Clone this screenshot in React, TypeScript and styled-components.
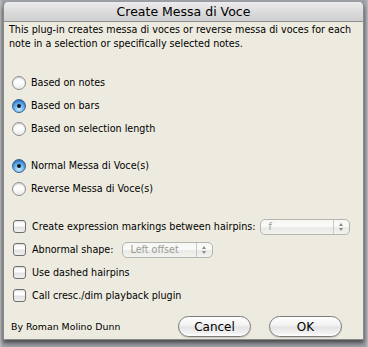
import React from "react";
import styled, { createGlobalStyle } from "styled-components";

const GlobalStyle = createGlobalStyle`
  html, body {
    margin: 0;
    padding: 0;
    background: #8d8f93;
  }
  body {
    width: 368px;
    height: 347px;
    overflow: hidden;
    font-family: "DejaVu Sans", "Liberation Sans", sans-serif;
  }
`;

const Backdrop = styled.div`
  width: 368px;
  height: 347px;
  padding: 2px 4px 0 3px;
  box-sizing: border-box;
  background: linear-gradient(90deg, #b9bbbf 0px, #9ea1a6 3px, #9ea1a6 365px, #b9bbbf 368px);
`;

const Window = styled.div`
  width: 361px;
  height: 338px;
  display: flex;
  flex-direction: column;
  background: #edebdf;
  border: 1px solid #8a8a8a;
  border-top: none;
  border-radius: 5px 5px 0 0;
  box-sizing: border-box;
  box-shadow: 0 3px 4px rgba(0, 0, 0, 0.55);
  overflow: hidden;
`;

const TitleBar = styled.div`
  height: 19px;
  flex-shrink: 0;
  display: flex;
  align-items: center;
  justify-content: center;
  background: linear-gradient(180deg, #ececec 0%, #dcdcdc 50%, #cfcfcf 100%);
  border-bottom: 1px solid #8e8e8e;
  font-size: 12.5px;
  color: #000;
`;

const Body = styled.div`
  flex: 1;
  display: flex;
  flex-direction: column;
  padding: 1px 0 0 5px;
`;

const Description = styled.p`
  margin: 0;
  font-size: 9.6px;
  line-height: 14px;
  color: #000;
  white-space: nowrap;
`;

const Group = styled.div<{ $top: number }>`
  display: flex;
  flex-direction: column;
  margin-top: ${(p) => p.$top}px;
`;

const Row = styled.label`
  height: 23px;
  display: flex;
  align-items: center;
  font-size: 9.6px;
  color: #000;
  white-space: nowrap;
`;

const Radio = styled.span<{ $on?: boolean }>`
  width: 14px;
  height: 14px;
  box-sizing: border-box;
  border-radius: 50%;
  margin: 0 5px 0 3px;
  flex-shrink: 0;
  display: flex;
  align-items: center;
  justify-content: center;
  border: 1px solid ${(p) => (p.$on ? "#3a5f8f" : "#8c8c8c")};
  background: ${(p) =>
    p.$on
      ? "radial-gradient(circle at 50% 75%, #c8ecff 0%, #72b8ee 40%, #3b86d4 75%, #2f6cb0 100%)"
      : "linear-gradient(180deg, #f4f4f4 0%, #ffffff 45%, #e9e9e9 100%)"};
  box-shadow: inset 0 1px 1px rgba(0, 0, 0, 0.15);

  &::after {
    content: "";
    display: ${(p) => (p.$on ? "block" : "none")};
    width: 4px;
    height: 4px;
    border-radius: 50%;
    background: #101820;
  }
`;

const Check = styled.span`
  width: 13px;
  height: 13px;
  box-sizing: border-box;
  margin: 0 6px 0 4px;
  flex-shrink: 0;
  border-radius: 3px;
  border: 1px solid #6f6f6f;
  background: linear-gradient(180deg, #f7f7f7 0%, #ffffff 45%, #e2e2e2 55%, #f0f0f0 100%);
  box-shadow: inset 0 1px 1px rgba(0, 0, 0, 0.1);
`;

const Popup = styled.span<{ $width: number; $gap: number }>`
  width: ${(p) => p.$width}px;
  height: 16px;
  box-sizing: border-box;
  margin-left: ${(p) => p.$gap}px;
  display: flex;
  align-items: stretch;
  border: 1px solid #b4b4b0;
  border-radius: 5px;
  background: linear-gradient(180deg, #f6f6f3 0%, #fbfbf9 45%, #e9e9e5 55%, #f3f3f0 100%);
  color: #9a9a96;
  font-size: 9.6px;
`;

const PopupText = styled.span`
  flex: 1;
  display: flex;
  align-items: center;
  padding-left: 8px;
`;

const PopupArrows = styled.span`
  width: 15px;
  border-left: 1px solid #c8c8c4;
  display: flex;
  flex-direction: column;
  align-items: center;
  justify-content: center;
  gap: 2px;
`;

const Tri = styled.span<{ $up?: boolean }>`
  width: 0;
  height: 0;
  border-left: 2.5px solid transparent;
  border-right: 2.5px solid transparent;
  ${(p) => (p.$up ? "border-bottom: 3px solid #8a8a86;" : "border-top: 3px solid #8a8a86;")}
`;

const Footer = styled.div`
  display: flex;
  align-items: center;
  margin-top: 9px;
  padding-right: 21px;
`;

const Author = styled.span`
  flex: 1;
  font-size: 9.4px;
  color: #000;
  padding-left: 2px;
`;

const Button = styled.button<{ $gap?: number }>`
  width: 73px;
  height: 21px;
  margin-left: ${(p) => p.$gap ?? 0}px;
  border-radius: 11px;
  border: 1px solid #7c7c7c;
  background: linear-gradient(180deg, #fdfdfd 0%, #f4f4f4 40%, #e4e4e4 55%, #f2f2f2 85%, #ffffff 100%);
  box-shadow: 0 1px 1px rgba(0, 0, 0, 0.15);
  font-family: "DejaVu Sans", "Liberation Sans", sans-serif;
  font-size: 12px;
  color: #000;
  padding: 0;
`;

function PopupMenu({ value, width, gap }: { value: string; width: number; gap: number }) {
  return (
    <Popup $width={width} $gap={gap}>
      <PopupText>{value}</PopupText>
      <PopupArrows>
        <Tri $up />
        <Tri />
      </PopupArrows>
    </Popup>
  );
}

export default function App() {
  return (
    <>
      <GlobalStyle />
      <Backdrop>
        <Window>
          <TitleBar>Create Messa di Voce</TitleBar>
          <Body>
            <Description>
              This plug-in creates messa di voces or reverse messa di voces for each
              <br />
              note in a selection or specifically selected notes.
            </Description>

            <Group $top={20}>
              <Row><Radio />Based on notes</Row>
              <Row><Radio $on />Based on bars</Row>
              <Row><Radio />Based on selection length</Row>
            </Group>

            <Group $top={14}>
              <Row><Radio $on />Normal Messa di Voce(s)</Row>
              <Row><Radio />Reverse Messa di Voce(s)</Row>
            </Group>

            <Group $top={15}>
              <Row>
                <Check />
                Create expression markings between hairpins:
                <PopupMenu value="f" width={90} gap={4} />
              </Row>
              <Row>
                <Check />
                Abnormal shape:
                <PopupMenu value="Left offset" width={91} gap={8} />
              </Row>
              <Row><Check />Use dashed hairpins</Row>
              <Row><Check />Call cresc./dim playback plugin</Row>
            </Group>

            <Footer>
              <Author>By Roman Molino Dunn</Author>
              <Button>Cancel</Button>
              <Button $gap={18}>OK</Button>
            </Footer>
          </Body>
        </Window>
      </Backdrop>
    </>
  );
}
